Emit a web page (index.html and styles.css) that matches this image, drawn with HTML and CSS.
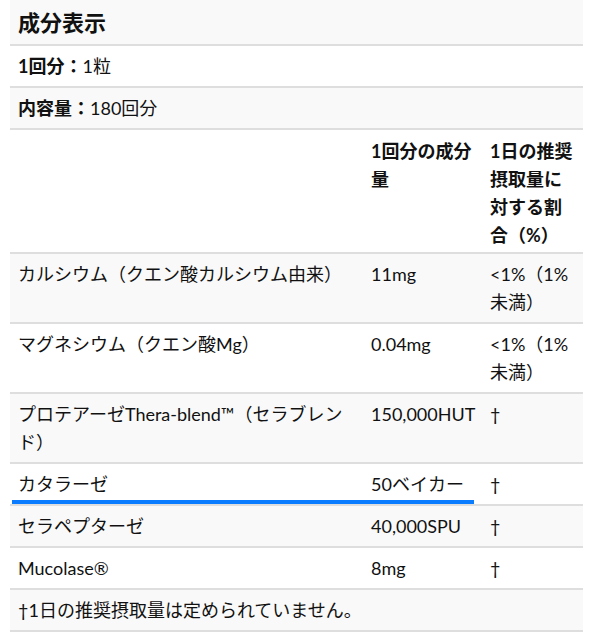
FILE: index.html
```html
<!DOCTYPE html>
<html lang="ja">
<head>
<meta charset="utf-8">
<link rel="stylesheet" href="styles.css">
</head>
<body>
<div class="wrap">
<table class="facts">
<colgroup><col class="c1"><col class="c2"><col class="c3"></colgroup>
<tbody>
<tr class="title"><td colspan="3">成分表示</td></tr>
<tr><td colspan="3"><b>1回分：</b>1粒</td></tr>
<tr><td colspan="3"><b>内容量：</b>180回分</td></tr>
<tr class="head"><td></td><td>1回分の成分量</td><td>1日の推奨摂取量に対する割合（%）</td></tr>
<tr><td>カルシウム（クエン酸カルシウム由来）</td><td>11mg</td><td>&lt;1%（1%未満）</td></tr>
<tr><td>マグネシウム（クエン酸Mg）</td><td>0.04mg</td><td>&lt;1%（1%未満）</td></tr>
<tr><td>プロテアーゼThera-blend™（セラブレンド）</td><td>150,000HUT</td><td>†</td></tr>
<tr class="sel"><td>カタラーゼ</td><td>50ベイカー</td><td class="dag">†</td></tr>
<tr><td>セラペプターゼ</td><td>40,000SPU</td><td>†</td></tr>
<tr><td>Mucolase®</td><td>8mg</td><td>†</td></tr>
<tr><td colspan="3">†1日の推奨摂取量は定められていません。</td></tr>
</tbody>
</table>
<div class="underline"></div>
</div>
</body>
</html>
```
FILE: styles.css
```css
html, body {
  margin: 0;
  padding: 0;
  background: #fff;
}
body {
  font-family: Lato, "Noto Sans CJK JP", sans-serif;
  font-size: 18px;
  color: #111;
}
.wrap {
  position: relative;
  padding-left: 10px;
}
.facts {
  width: 573px;
  border-collapse: collapse;
  table-layout: fixed;
}
.c1 { width: 353px; }
.c2 { width: 119px; }
.c3 { width: 101px; }
.facts td {
  padding: 6px 8px 6px;
  line-height: 28px;
  vertical-align: top;
  border-bottom: 2px solid #dedede;
}
.facts tr:nth-child(odd) td {
  background: #f9f9f9;
}
.facts b {
  font-weight: 700;
}
.title td {
  font-size: 22px;
  font-weight: 700;
  padding-top: 8px;
  padding-bottom: 6px;
  line-height: 30px;
}
.head td {
  font-weight: 700;
  padding-top: 7px;
  padding-bottom: 3px;
}
.dag {
  padding-top: 9px;
}
.underline {
  position: absolute;
  left: 12px;
  top: 500px;
  width: 462px;
  height: 4px;
  background: #0a7cff;
}
```
